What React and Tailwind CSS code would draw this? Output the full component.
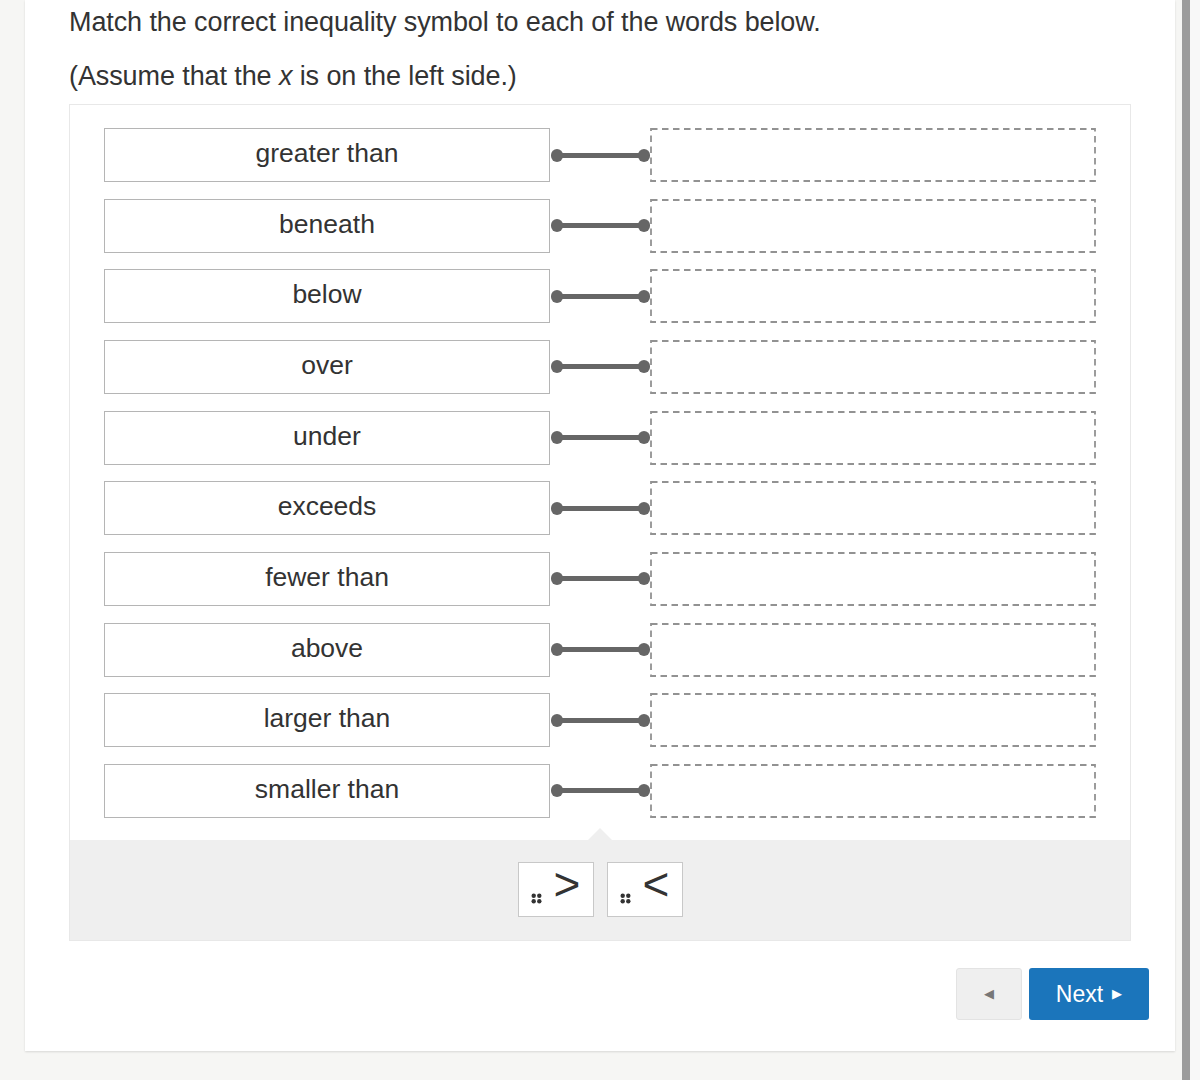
import React from 'react';

const WORDS = [
  'greater than',
  'beneath',
  'below',
  'over',
  'under',
  'exceeds',
  'fewer than',
  'above',
  'larger than',
  'smaller than',
];

const SYMBOLS = ['>', '<'];

function Grip() {
  return (
    <svg width="11" height="11" viewBox="0 0 11 11" className="shrink-0 mb-[12px]">
      <circle cx="2.7" cy="2.7" r="2.2" fill="#333" />
      <circle cx="8.3" cy="2.7" r="2.2" fill="#333" />
      <circle cx="2.7" cy="8.3" r="2.2" fill="#333" />
      <circle cx="8.3" cy="8.3" r="2.2" fill="#333" />
    </svg>
  );
}

function Connector() {
  return (
    <div className="w-[100px] h-full flex items-center pl-[1px] -mr-[3px] relative z-10">
      <div className="w-[12px] h-[13px] rounded-full bg-[#666] shrink-0" />
      <div className="flex-1 h-[5px] bg-[#666] -mx-[3px]" />
      <div className="w-[12px] h-[13px] rounded-full bg-[#666] shrink-0" />
    </div>
  );
}

// dashed drop target outline
function DropZone() {
  return (
    <div className="w-[446px] h-full relative ml-[3px]">
      <svg className="absolute inset-0" width="446" height="54">
        <rect
          x="1"
          y="1"
          width="444"
          height="52"
          fill="none"
          stroke="#929292"
          strokeWidth="1.8"
          strokeDasharray="6.5 4.5"
        />
      </svg>
    </div>
  );
}

export default function App() {
  return (
    <div
      className="min-h-[1080px] w-[1200px] bg-[#f6f6f4] flex text-[#333]"
      style={{ fontFamily: '"Liberation Sans", Arial, sans-serif' }}
    >
      <div className="ml-[25px] w-[1150px] h-[1051px] bg-white shadow-[0_1px_2px_rgba(0,0,0,0.12)] pl-[44px] pr-[26px] pt-[6px]">
        <p className="text-[27px] leading-[32px] tracking-[-0.1px]">
          Match the correct inequality symbol to each of the words below.
        </p>
        <p className="text-[27px] leading-[32px] mt-[22px] tracking-[-0.1px]">
          (Assume that the <i>x</i> is on the left side.)
        </p>

        <div className="mt-[12px] w-[1062px] border border-[#e8e8e8]">
          <div className="pl-[34px] pt-[23px] pb-[22px] flex flex-col gap-[16.67px]">
            {WORDS.map((w) => (
              <div key={w} className="flex h-[54px] items-stretch">
                <div className="w-[446px] border border-[#b5b5b5] flex items-center justify-center text-[26.5px] pb-[2px]">
                  {w}
                </div>
                <Connector />
                <DropZone />
              </div>
            ))}
          </div>

          <div className="relative bg-[#efefef] h-[100px] flex justify-center pt-[22px] gap-[13px]">
            <div className="absolute left-1/2 -translate-x-1/2 -top-[12px] w-0 h-0 border-l-[12px] border-r-[12px] border-b-[12px] border-l-transparent border-r-transparent border-b-[#efefef]" />
            {SYMBOLS.map((s) => (
              <div
                key={s}
                className="w-[76px] h-[55px] bg-white border border-[#c8c8c8] flex items-end pl-[12px] gap-[12px]"
              >
                <Grip />
                <span className="text-[46px] leading-none mb-[9px]">{s}</span>
              </div>
            ))}
          </div>
        </div>

        <div className="flex justify-end gap-[7px] mt-[27px]">
          <button className="w-[66px] h-[52px] bg-[#efefef] border border-[#e3e3e3] rounded-[3px] flex items-center justify-center text-[#777] text-[13px]">
            ◀
          </button>
          <button className="w-[120px] h-[52px] bg-[#1b75bb] rounded-[3px] flex items-center justify-center text-white text-[23px] gap-[9px]">
            Next <span className="text-[13px]">▶</span>
          </button>
        </div>
      </div>

      <div className="ml-[7px] w-[8px] bg-[#9c9c9c]" />
      <div className="flex-1 bg-[#f8f8f8]" />
    </div>
  );
}
